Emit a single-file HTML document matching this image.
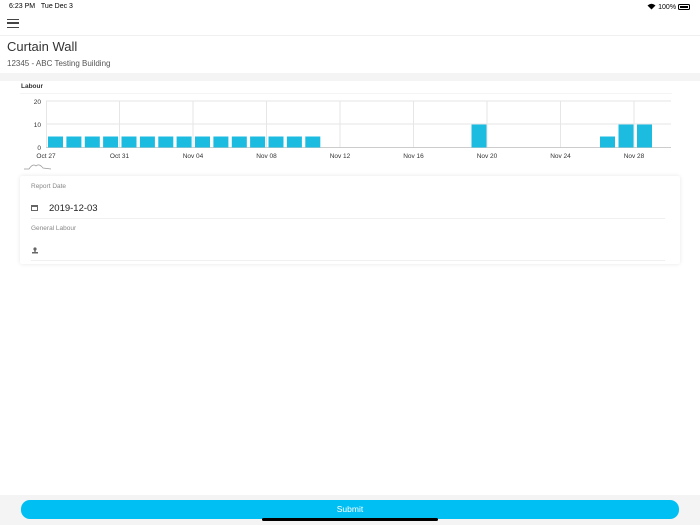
<!DOCTYPE html>
<html><head><style>
*{margin:0;padding:0;box-sizing:border-box}
body{width:700px;height:525px;background:#fff;font-family:"Liberation Sans",sans-serif;position:relative;overflow:hidden;color:#333}
.a{position:absolute}
</style></head><body>
<div class="a" style="left:9px;top:3px;font-size:7px;color:#000">6:23 PM&nbsp;&nbsp;&nbsp;Tue Dec 3</div>
<div class="a" style="right:10px;top:3px;font-size:7px;color:#000">
<svg width="9" height="7" viewBox="0 0 9 7" style="vertical-align:-1px"><path d="M0.5 2.5 Q4.5 -1 8.5 2.5 L4.5 6.5Z" fill="#000"/></svg> 100% <span style="display:inline-block;width:12px;height:6px;border:1px solid #000;border-radius:1.5px;vertical-align:-1px;background:#000;box-shadow:inset 0 0 0 1px #fff"></span></div>
<div class="a" style="left:7px;top:19px;width:12px;height:9px;border-top:1.5px solid #444;border-bottom:1.5px solid #444"><div style="margin-top:2.3px;height:1.5px;background:#444"></div></div>
<div class="a" style="left:0;top:35px;width:700px;height:1px;background:#f0f0f0"></div>
<div class="a" style="left:7px;top:39px;font-size:13px;color:#333">Curtain Wall</div>
<div class="a" style="left:7px;top:59px;font-size:8px;color:#555">12345 - ABC Testing Building</div>
<div class="a" style="left:0;top:73px;width:700px;height:8px;background:#f4f4f4"></div>
<div class="a" style="left:21px;top:83px;font-size:6.5px;font-weight:bold;color:#333">Labour</div>
<div class="a" style="left:20px;top:93px;width:652px;height:1px;background:#f4f4f4"></div>
<svg class="a" style="left:0;top:95px" width="700" height="80">
<g stroke="#e6e6e6" stroke-width="1">
<line x1="46" y1="6" x2="671" y2="6"/><line x1="46" y1="29" x2="671" y2="29"/>
<line x1="46.5" y1="6" x2="46.5" y2="52"/><line x1="119.5" y1="6" x2="119.5" y2="52"/><line x1="193" y1="6" x2="193" y2="52"/><line x1="266.5" y1="6" x2="266.5" y2="52"/><line x1="340" y1="6" x2="340" y2="52"/><line x1="413.5" y1="6" x2="413.5" y2="52"/><line x1="487" y1="6" x2="487" y2="52"/><line x1="560.5" y1="6" x2="560.5" y2="52"/><line x1="634" y1="6" x2="634" y2="52"/>
</g>
<line x1="46" y1="52.5" x2="671" y2="52.5" stroke="#ccc"/>
<g fill="#1cbbe0">
<rect x="48" y="41.5" width="15" height="11"/><rect x="66.4" y="41.5" width="15" height="11"/><rect x="84.8" y="41.5" width="15" height="11"/><rect x="103.1" y="41.5" width="15" height="11"/><rect x="121.5" y="41.5" width="15" height="11"/><rect x="139.9" y="41.5" width="15" height="11"/><rect x="158.3" y="41.5" width="15" height="11"/><rect x="176.6" y="41.5" width="15" height="11"/><rect x="195" y="41.5" width="15" height="11"/><rect x="213.4" y="41.5" width="15" height="11"/><rect x="231.8" y="41.5" width="15" height="11"/><rect x="250.1" y="41.5" width="15" height="11"/><rect x="268.5" y="41.5" width="15" height="11"/><rect x="286.9" y="41.5" width="15" height="11"/><rect x="305.3" y="41.5" width="15" height="11"/>
<rect x="471.5" y="29.5" width="15" height="23"/>
<rect x="600" y="41.5" width="15" height="11"/><rect x="618.5" y="29.5" width="15" height="23"/><rect x="637" y="29.5" width="15" height="23"/>
</g>
<g font-size="6.5" fill="#333" font-family="Liberation Sans,sans-serif">
<text x="41" y="9" text-anchor="end">20</text><text x="41" y="32" text-anchor="end">10</text><text x="41" y="55" text-anchor="end">0</text>
<g text-anchor="middle"><text x="46" y="63">Oct 27</text><text x="119.5" y="63">Oct 31</text><text x="193" y="63">Nov 04</text><text x="266.5" y="63">Nov 08</text><text x="340" y="63">Nov 12</text><text x="413.5" y="63">Nov 16</text><text x="487" y="63">Nov 20</text><text x="560.5" y="63">Nov 24</text><text x="634" y="63">Nov 28</text></g>
</g>
<path d="M24 74 L29 74 Q33 68 36 71 Q39 68 43 73 L51 74" fill="none" stroke="#999" stroke-width="0.7"/>
</svg>
<div class="a" style="left:20px;top:176px;width:660px;height:88px;background:#fff;box-shadow:0 0 4px rgba(0,0,0,0.1);border-radius:2px"></div>
<div class="a" style="left:31px;top:183px;font-size:6.5px;color:#888">Report Date</div>
<div class="a" style="left:31px;top:205px;width:7px;height:6px;border:1px solid #666;border-top-width:2px"></div>
<div class="a" style="left:49px;top:203px;font-size:9.5px;color:#222">2019-12-03</div>
<div class="a" style="left:31px;top:218px;width:634px;height:1px;background:#f0f0f0"></div>
<div class="a" style="left:31px;top:225px;font-size:6.5px;color:#888">General Labour</div>
<svg class="a" style="left:32px;top:247px" width="6" height="7"><circle cx="3" cy="2" r="1.6" fill="#666"/><rect x="0" y="5" width="6" height="1.5" fill="#666"/><rect x="2.3" y="3" width="1.4" height="2.5" fill="#666"/></svg>
<div class="a" style="left:31px;top:260px;width:634px;height:1px;background:#f0f0f0"></div>
<div class="a" style="left:0;top:495px;width:700px;height:30px;background:#f4f4f4"></div>
<div class="a" style="left:21px;top:500px;width:658px;height:19px;background:#00bff2;border-radius:9px;color:#fff;font-size:8.5px;text-align:center;line-height:19px">Submit</div>
<div class="a" style="left:262px;top:518px;width:176px;height:3px;background:#000;border-radius:2px"></div>
</body></html>
